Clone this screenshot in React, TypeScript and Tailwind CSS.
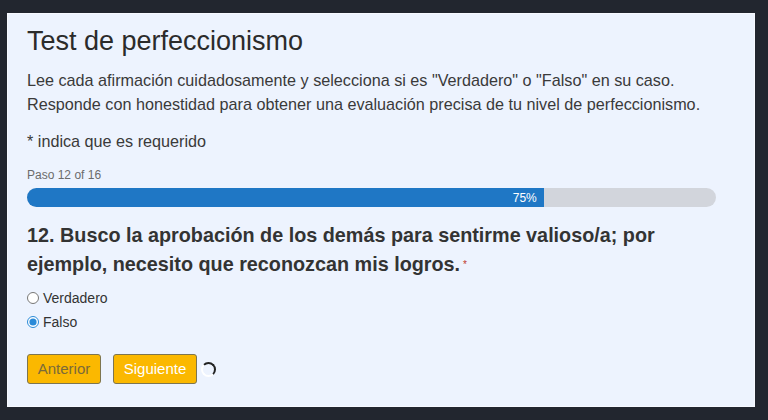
import React from 'react';

const options = ['Verdadero', 'Falso'];

const App = () => {
  const step = 12;
  const total = 16;
  const percent = 75;

  return (
    <div className="h-[420px] w-[768px] bg-[#22262f] pt-[13px] pl-[7px] font-['Liberation_Sans',Arial,sans-serif] text-[#333333]">
      <div className="h-[394px] w-[748px] border border-[#f7f9ff] bg-[#edf3fe] px-[19px] pt-[10px]">
        <h1 className="text-[27px] leading-[34px] text-[#2b2b2b]">Test de perfeccionismo</h1>
        <p className="mt-[10px] text-[16.2px] leading-[24px] text-[#3a3a3a]">
          Lee cada afirmación cuidadosamente y selecciona si es "Verdadero" o "Falso" en su caso.
          <br />
          Responde con honestidad para obtener una evaluación precisa de tu nivel de perfeccionismo.
        </p>
        <p className="mt-[13px] text-[16.2px] leading-[24px] text-[#3a3a3a]">* indica que es requerido</p>

        <div className="mt-[14px] text-[12px] leading-[16px] text-[#6b6b6b]">
          Paso {step} of {total}
        </div>
        <div className="mt-[5px] flex h-[19px] w-[689px] overflow-hidden rounded-full bg-[#d2d5dc]">
          <div
            className="flex h-full items-center justify-end bg-[#1f77c5] pr-[7px] text-[12px] text-white"
            style={{ width: `${percent}%` }}
          >
            {percent}%
          </div>
        </div>

        <h2 className="mt-[14px] w-[660px] text-[19.8px] font-bold leading-[29px] text-[#333333]">
          {step}. Busco la aprobación de los demás para sentirme valioso/a; por ejemplo, necesito que reconozcan mis logros.
          <span className="relative -top-[3px] ml-[3px] text-[10px] leading-none font-normal text-[#c0392b]">*</span>
        </h2>

        <div className="mt-[10px] flex flex-col gap-[6px]">
          {options.map((opt) => (
            <label key={opt} className="flex items-center gap-[4px] text-[14px] leading-[18px] text-[#333333]">
              <input
                type="radio"
                name="q12"
                defaultChecked={opt === 'Falso'}
                className="m-0 h-[12px] w-[12px] accent-[#2a8ad8]"
              />
              {opt}
            </label>
          ))}
        </div>

        <div className="mt-[23px] flex items-center">
          <button className="h-[30px] w-[74px] rounded-[3px] border border-[#7d7550] bg-[#fbb800] text-[15px] text-[#7a6a3a]">
            Anterior
          </button>
          <button className="ml-[12px] h-[30px] w-[84px] rounded-[3px] border border-[#7d7550] bg-[#fbb800] text-[15px] text-white">
            Siguiente
          </button>
          <div className="ml-[4px] h-[15px] w-[15px] rounded-full border-2 border-white border-t-[#222] border-r-[#222]" />
        </div>
      </div>
    </div>
  );
};

export default App;
